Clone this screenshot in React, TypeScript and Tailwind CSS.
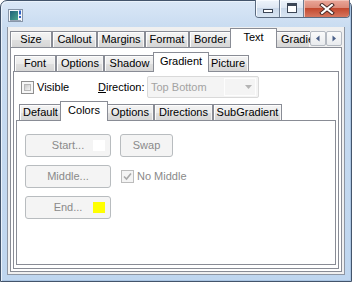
import React from 'react';

type TabDef = { label: string; w: string; selected?: boolean };

const OUTER_TABS: TabDef[] = [
  { label: 'Size', w: 'w-[42px]' },
  { label: 'Callout', w: 'w-[45px]' },
  { label: 'Margins', w: 'w-[48px]' },
  { label: 'Format', w: 'w-[44px]' },
  { label: 'Border', w: 'w-[43px]' },
  { label: 'Text', w: 'w-[47px]', selected: true },
];

const INNER_TABS: TabDef[] = [
  { label: 'Font', w: 'w-[42px]' },
  { label: 'Options', w: 'w-[48px]' },
  { label: 'Shadow', w: 'w-[51px]' },
  { label: 'Gradient', w: 'w-[56px]', selected: true },
  { label: 'Picture', w: 'w-[42px]' },
];

const GRADIENT_TABS: TabDef[] = [
  { label: 'Default', w: 'w-[43px]' },
  { label: 'Colors', w: 'w-[48px]', selected: true },
  { label: 'Options', w: 'w-[48px]' },
  { label: 'Directions', w: 'w-[59px]' },
  { label: 'SubGradient', w: 'w-[69px]' },
];

const tabFace =
  'border border-b-0 border-[#898c95] bg-[linear-gradient(180deg,#f4f4f4_0%,#ececec_50%,#e0e0e0_51%,#d6d6d6_100%)] shadow-[inset_1px_1px_0_#fdfdfd,inset_-1px_0_0_#f6f6f6]';

function Tab({ tab }: { tab: TabDef }) {
  if (tab.selected) {
    return (
      <div
        className={`${tab.w} relative z-10 -mx-[2px] -mb-px h-[20px] shrink-0 border border-b-0 border-[#898c95] bg-white flex justify-center pt-[3px]`}
      >
        {tab.label}
      </div>
    );
  }
  return (
    <div className={`${tab.w} h-[16px] shrink-0 ${tabFace} flex items-center justify-center`}>
      {tab.label}
    </div>
  );
}

function AppIcon() {
  return (
    <svg width="16" height="16" viewBox="0 0 16 16" className="ml-[7px] mt-[7px] shrink-0">
      <rect x="0.5" y="1.5" width="14" height="12" fill="#f4f7fb" stroke="#8795a8" />
      <defs>
        <linearGradient id="ic" x1="0" y1="0" x2="1" y2="1">
          <stop offset="0" stopColor="#1d5f7a" />
          <stop offset="1" stopColor="#4aa58c" />
        </linearGradient>
      </defs>
      <rect x="2" y="3" width="8" height="9" fill="url(#ic)" />
      <rect x="11" y="2.5" width="2" height="4" fill="#2f62c4" />
      <rect x="11" y="8" width="2" height="2" fill="#2f62c4" />
      <rect x="2" y="12" width="11" height="1" fill="#9aa6b6" />
    </svg>
  );
}

function CaptionButtons() {
  const glass =
    'bg-[linear-gradient(180deg,#eef4fb_0%,#dfe8f3_45%,#cad8e9_50%,#d9e5f2_100%)] shadow-[inset_1px_1px_0_#f8fbff]';
  return (
    <div className="ml-auto mr-px -mt-px flex h-[18px] shrink-0 overflow-hidden rounded-b-[4px] border border-t-0 border-[#5b6b80]">
      <div className={`w-[24px] border-r border-[#6f7f94] ${glass} flex items-end justify-center pb-[4px]`}>
        <div className="h-[4px] w-[10px] border border-[#3c4656] bg-white" />
      </div>
      <div className={`w-[24px] border-r border-[#6f7f94] ${glass} flex items-start justify-center pt-[3px]`}>
        <div className="h-[10px] w-[10px] border border-t-[3px] border-[#3c4656] bg-white" />
      </div>
      <div className="w-[45px] bg-[linear-gradient(180deg,#eaa79a_0%,#dc8a78_45%,#c3492f_50%,#d6765e_100%)] shadow-[inset_1px_1px_0_#f2c3b8] flex items-center justify-center">
        <svg width="18" height="12" viewBox="0 0 18 12">
          <path d="M4 2 L14 10 M14 2 L4 10" stroke="#4a2a26" strokeWidth="4" strokeLinecap="square" />
          <path d="M4 2 L14 10 M14 2 L4 10" stroke="#ffffff" strokeWidth="2" strokeLinecap="square" />
        </svg>
      </div>
    </div>
  );
}

function ScrollButton({ dir }: { dir: 'left' | 'right' }) {
  return (
    <div className="h-[15px] w-[16px] rounded-[2px] border border-[#b4b9c1] bg-[linear-gradient(180deg,#fbfbfb,#e9ebee)] flex items-center justify-center">
      <svg width="6" height="7" viewBox="0 0 6 7">
        {dir === 'left' ? (
          <polygon points="4.5,0.5 1,3.5 4.5,6.5" fill="#4a5f88" />
        ) : (
          <polygon points="1.5,0.5 5,3.5 1.5,6.5" fill="#4a5f88" />
        )}
      </svg>
    </div>
  );
}

function DisabledButton({ label, swatch }: { label: string; swatch?: string }) {
  return (
    <div className="relative h-[23px] rounded-[3px] border border-[#b8bcbf] bg-[#f4f4f4] text-[#8a8a8a] flex items-center justify-center">
      {label}
      {swatch && <div className={`absolute right-[5px] top-[5px] h-[11px] w-[12px] ${swatch}`} />}
    </div>
  );
}

export default function App() {
  return (
    <div className="w-[352px] h-[282px] flex flex-col rounded-t-[7px] border border-[#43546b] bg-[linear-gradient(180deg,#dae7f6_0px,#c9dcf1_26px,#bfd6ef_100%)] shadow-[inset_1px_1px_0_#eaf2fb,inset_-1px_-1px_0_#a9c4e2] font-['Liberation_Sans',Arial,sans-serif] text-[11px] leading-none text-black">
      <div className="flex h-[26px] shrink-0">
        <AppIcon />
        <CaptionButtons />
      </div>

      <div className="flex-1 mx-[6px] mb-[6px] border border-t-0 border-[#8e96a3] bg-[#f0f0f0] flex flex-col px-[2px] pt-px pb-[2px]">
        <div className="flex h-[19px] items-end">
          {OUTER_TABS.map((t) => (
            <Tab key={t.label} tab={t} />
          ))}
          <div className={`h-[16px] w-[35px] shrink-0 ${tabFace} border-r-0 flex items-center pl-[5px]`}>Gradie</div>
          <div className="self-start mt-[3px] flex shrink-0">
            <ScrollButton dir="left" />
            <ScrollButton dir="right" />
          </div>
        </div>

        <div className="flex-1 border border-[#898c95] bg-white flex flex-col px-[2px] pt-[4px] pb-[2px]">
          <div className="flex h-[19px] items-end pl-px">
            {INNER_TABS.map((t) => (
              <Tab key={t.label} tab={t} />
            ))}
          </div>

          <div className="flex-1 border border-[#898c95] bg-white flex flex-col px-[2px] pt-[4px] pb-[3px]">
            <div className="flex h-[22px] items-center pl-[5px]">
              <div className="w-[77px] flex items-center">
                <div className="h-[13px] w-[13px] border border-[#8f8f8f] bg-[#f6f6f6] p-[2px]">
                  <div className="h-full w-full border border-[#b7b7b7] bg-[linear-gradient(135deg,#c8c8c8,#f4f4f4)]" />
                </div>
                <span className="ml-[3px]">Visible</span>
              </div>
              <span className="w-[49px]">
                <span className="underline">D</span>irection:
              </span>
              <div className="h-[22px] w-[112px] rounded-[2px] border border-[#d9d9d9] bg-[#f4f4f4] flex items-center pl-[3px] pr-[2px] text-[#a3a3a3]">
                <span>Top Bottom</span>
                <div className="ml-auto h-[18px] w-[32px] border border-[#fdfdfd] flex items-center justify-end pr-[3px]">
                  <svg width="7" height="4" viewBox="0 0 7 4">
                    <polygon points="0,0 7,0 3.5,4" fill="#b4b4b4" />
                  </svg>
                </div>
              </div>
            </div>

            <div className="mt-[3px] flex h-[19px] items-end pl-[3px]">
              {GRADIENT_TABS.map((t) => (
                <Tab key={t.label} tab={t} />
              ))}
            </div>

            <div className="flex-1 border border-[#898c95] bg-white pl-[8px] pt-[13px]">
              <div className="grid grid-cols-[86px_53px] gap-x-[9px] gap-y-[8px]">
                <DisabledButton label="Start..." swatch="bg-white" />
                <DisabledButton label="Swap" />
                <DisabledButton label="Middle..." />
                <div className="flex items-center pl-px text-[#8a8a8a] whitespace-nowrap">
                  <div className="h-[13px] w-[13px] shrink-0 border border-[#bcbcbc] bg-[#f4f4f4] flex items-center justify-center">
                    <svg width="11" height="11" viewBox="0 0 11 11">
                      <path d="M2 5.5 L4.5 8 L9 2.5" stroke="#a8a8a8" strokeWidth="1.6" fill="none" />
                    </svg>
                  </div>
                  <span className="ml-[3px]">No Middle</span>
                </div>
                <DisabledButton label="End..." swatch="bg-[#ffff00]" />
              </div>
            </div>
          </div>
        </div>
      </div>
    </div>
  );
}
